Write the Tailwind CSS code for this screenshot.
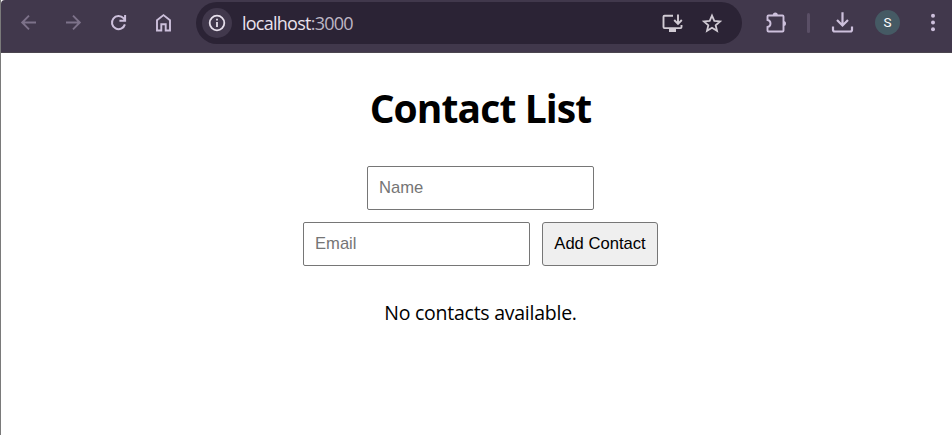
<!DOCTYPE html>
<html lang="en">
<head>
<meta charset="utf-8">
<title>Contact List</title>
<script src="https://cdn.jsdelivr.net/npm/@tailwindcss/browser@4"></script>
</head>
<body class="h-[435px] overflow-hidden border-l border-[#7a7a7a] bg-white text-black">
<header class="h-[53px] rounded-tl-sm border-b border-[#4b454f] bg-[#41384c]">
  <div class="flex h-[45px] items-center pl-[17px] text-[#cdc0dc]">
    <nav class="flex gap-6">
      <svg class="size-[21px] text-[#7d728a]" viewBox="0 0 21 21" fill="none" stroke="currentColor" stroke-width="1.9"><path d="M18 10.5H4.5M11 3.7L4.2 10.5 11 17.3"/></svg>
      <svg class="size-[21px] text-[#7d728a]" viewBox="0 0 21 21" fill="none" stroke="currentColor" stroke-width="1.9"><path d="M3 10.5h13.5M10 3.7l6.8 6.8-6.8 6.8"/></svg>
      <svg class="size-[21px]" viewBox="0 0 21 21" fill="none" stroke="currentColor" stroke-width="2"><path d="M16.9 12.4A6.6 6.6 0 1 1 15.5 6.2L17 8.1M17.1 3v5.7h-5.7"/></svg>
      <svg class="size-[21px]" viewBox="0 0 21 21" fill="none" stroke="currentColor" stroke-width="1.9"><path d="M4 8.2l6.5-5.1L17 8.2v10.3h-4.3v-6.2H8.3v6.2H4z"/></svg>
    </nav>
    <div class="ml-[22px] flex h-[42px] w-[546px] items-center rounded-full bg-[#2b2335] pl-1.5 pr-[19px] text-[#d1cbd4]">
      <div class="flex size-[30px] items-center justify-center rounded-full bg-[#41384c]">
        <svg class="size-[18px] text-[#e6dfeb]" viewBox="0 0 18 18" fill="none" stroke="currentColor" stroke-width="1.8"><circle cx="9" cy="9" r="7.3"/><path d="M9 8v5M9 4.8v1.8"/></svg>
      </div>
      <div class="ml-2.5 whitespace-nowrap font-['Open_Sans','Noto_Sans',sans-serif] text-[18px] leading-6 tracking-[-0.75px] text-[#e9e2ed]">localhost<span class="text-[#beb6c4]">:3000</span></div>
      <svg class="ml-auto h-[21px] w-[23px]" viewBox="0 0 23 21" fill="none" stroke="currentColor" stroke-width="1.9"><path d="M12 3.8H3.5q-1 0-1 1v10.3q0 1 1 1h16q1 0 1-1V13M17 2.5v9M13.2 8L17 11.8 20.8 8"/><path d="M8 17h7v3H8z" fill="currentColor" stroke="none"/></svg>
      <svg class="ml-[17px] size-[22px]" viewBox="0 0 21 21" fill="none" stroke="currentColor" stroke-width="1.7"><path d="M10.5 3.4l2.2 5.1 5.5.5-4.2 3.6 1.3 5.4-4.8-2.9L5.7 18 7 12.6 2.8 9l5.5-.5z"/></svg>
    </div>
    <svg class="ml-[22px] size-[23px]" viewBox="0 0 23 23" fill="none" stroke="currentColor" stroke-width="1.9"><path d="M3.5 9V5.500q0-1 1-1h14q1 0 1 1v14q0 1-1 1h-14q-1 0-1-1V16Q6.500 15.500 6.500 12.500T3.500 9z"/><path d="M8.800 4a2.500 2.500 0 0 1 5 0zM19.500 10a2.500 2.500 0 0 1 0 5z" fill="currentColor" stroke="none"/></svg>
    <div class="ml-5 h-5 w-[3px] rounded-full bg-[#5a4f66]"></div>
    <svg class="ml-[21px] size-[23px]" viewBox="0 0 23 23" fill="none" stroke="currentColor" stroke-width="2.2"><path d="M11.500 1.300v13M6 9l5.500 5.500L17 9M2 15.500v3.300q0 1.700 1.700 1.700h15.600q1.700 0 1.700-1.700v-3.300"/></svg>
    <div class="ml-[21px] flex size-[25px] items-center justify-center rounded-full bg-[#455a64] font-[Roboto,sans-serif] text-[13.5px] text-white">S</div>
    <svg class="ml-[29.5px] h-[21px] w-1.5" viewBox="0 0 6 21" fill="currentColor"><circle cx="3" cy="3.700" r="2"/><circle cx="3" cy="10.500" r="2"/><circle cx="3" cy="17.300" r="2"/></svg>
  </div>
</header>
<main class="flex flex-col items-center pt-7 pl-2">
  <h1 class="whitespace-nowrap font-['Open_Sans','Noto_Sans',sans-serif] text-[39px] font-bold leading-[54px] tracking-[-0.9px]">Contact List</h1>
  <form class="mt-[31px] flex flex-col items-center gap-3 font-['Liberation_Sans',Arial,sans-serif] text-[16.6px]">
    <input type="text" placeholder="Name" class="h-11 w-[227px] rounded-xs border border-[#767676] px-[11px] placeholder:text-[#757575]">
    <div class="flex gap-3">
      <input type="email" placeholder="Email" class="h-11 w-[227px] rounded-xs border border-[#767676] px-[11px] placeholder:text-[#757575]">
      <button type="button" class="h-11 w-[116px] whitespace-nowrap rounded-[3px] border border-[#767676] bg-[#efefef]">Add Contact</button>
    </div>
  </form>
  <p class="mt-[33px] whitespace-nowrap font-['Open_Sans','Noto_Sans',sans-serif] text-[19.5px] leading-7 tracking-[-0.25px]">No contacts available.</p>
</main>
</body>
</html>
